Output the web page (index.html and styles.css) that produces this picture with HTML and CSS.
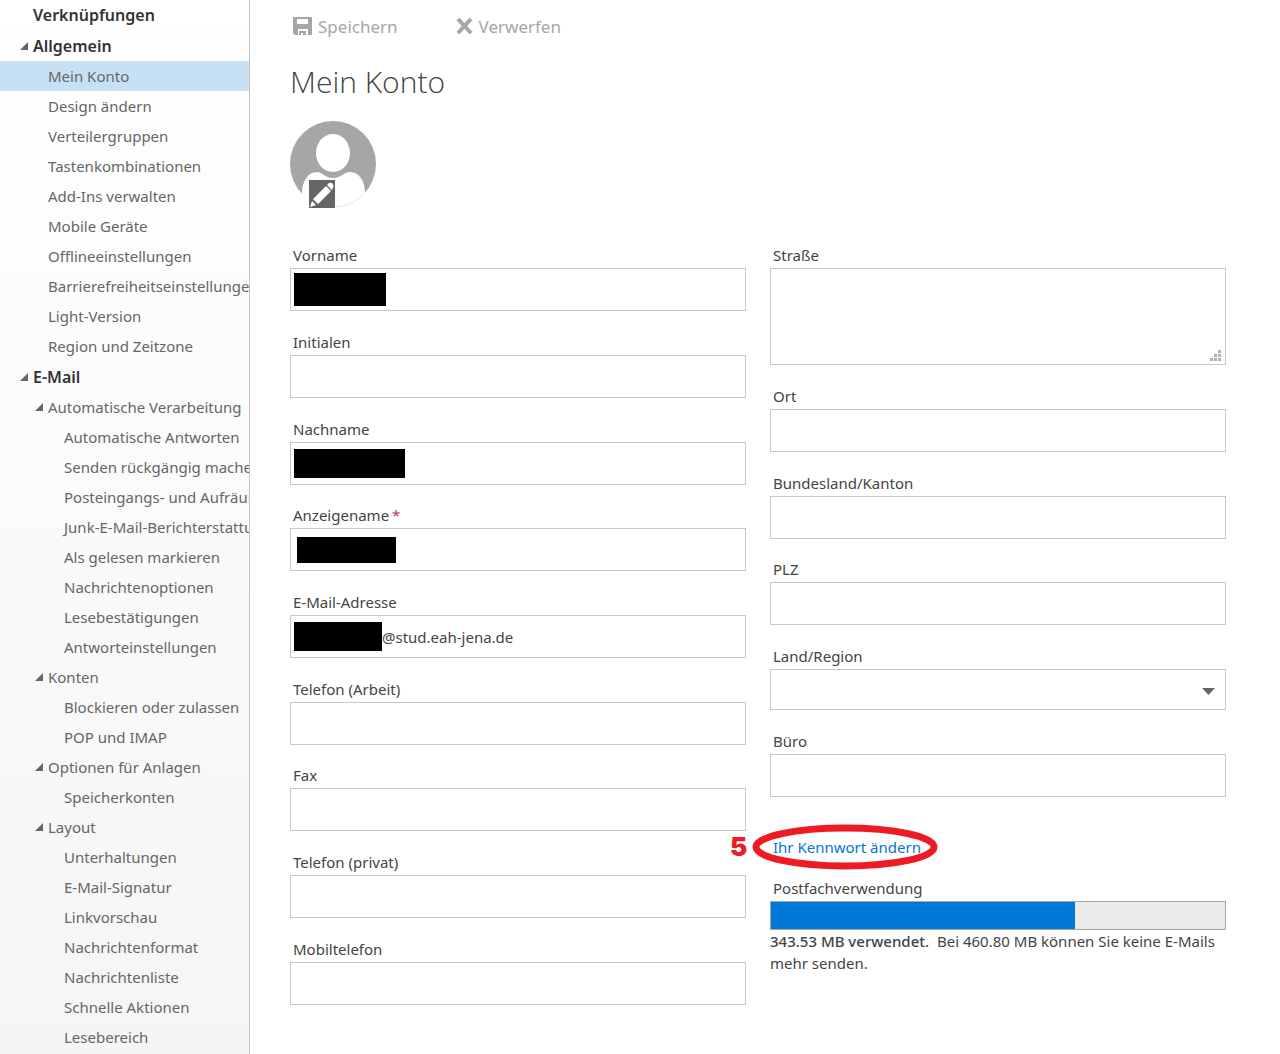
FILE: index.html
```html
<!DOCTYPE html>
<html lang="de">
<head>
<meta charset="utf-8">
<meta name="viewport" content="width=device-width, initial-scale=1">
<title>Mein Konto</title>
<link rel="stylesheet" href="styles.css">
</head>
<body>
<div class="app">
  <nav class="sidebar">
    <ul class="tree">
      <li class="node top"><a href="#">Verknüpfungen</a></li>
      <li class="node top section"><svg class="caret" viewBox="0 0 9 9"><path d="M9 0V9H0Z"/></svg><a href="#">Allgemein</a></li>
      <li class="node sub selected"><a href="#">Mein Konto</a></li>
      <li class="node sub"><a href="#">Design ändern</a></li>
      <li class="node sub"><a href="#">Verteilergruppen</a></li>
      <li class="node sub"><a href="#">Tastenkombinationen</a></li>
      <li class="node sub"><a href="#">Add-Ins verwalten</a></li>
      <li class="node sub"><a href="#">Mobile Geräte</a></li>
      <li class="node sub"><a href="#">Offlineeinstellungen</a></li>
      <li class="node sub"><a href="#">Barrierefreiheitseinstellungen</a></li>
      <li class="node sub"><a href="#">Light-Version</a></li>
      <li class="node sub"><a href="#">Region und Zeitzone</a></li>
      <li class="node top section"><svg class="caret" viewBox="0 0 9 9"><path d="M9 0V9H0Z"/></svg><a href="#">E-Mail</a></li>
      <li class="node sub"><svg class="caret" viewBox="0 0 9 9"><path d="M9 0V9H0Z"/></svg><a href="#">Automatische Verarbeitung</a></li>
      <li class="node leaf"><a href="#">Automatische Antworten</a></li>
      <li class="node leaf"><a href="#">Senden rückgängig machen</a></li>
      <li class="node leaf"><a href="#">Posteingangs- und Aufräumregeln</a></li>
      <li class="node leaf"><a href="#">Junk-E-Mail-Berichterstattung</a></li>
      <li class="node leaf"><a href="#">Als gelesen markieren</a></li>
      <li class="node leaf"><a href="#">Nachrichtenoptionen</a></li>
      <li class="node leaf"><a href="#">Lesebestätigungen</a></li>
      <li class="node leaf"><a href="#">Antworteinstellungen</a></li>
      <li class="node sub"><svg class="caret" viewBox="0 0 9 9"><path d="M9 0V9H0Z"/></svg><a href="#">Konten</a></li>
      <li class="node leaf"><a href="#">Blockieren oder zulassen</a></li>
      <li class="node leaf"><a href="#">POP und IMAP</a></li>
      <li class="node sub"><svg class="caret" viewBox="0 0 9 9"><path d="M9 0V9H0Z"/></svg><a href="#">Optionen für Anlagen</a></li>
      <li class="node leaf"><a href="#">Speicherkonten</a></li>
      <li class="node sub"><svg class="caret" viewBox="0 0 9 9"><path d="M9 0V9H0Z"/></svg><a href="#">Layout</a></li>
      <li class="node leaf"><a href="#">Unterhaltungen</a></li>
      <li class="node leaf"><a href="#">E-Mail-Signatur</a></li>
      <li class="node leaf"><a href="#">Linkvorschau</a></li>
      <li class="node leaf"><a href="#">Nachrichtenformat</a></li>
      <li class="node leaf"><a href="#">Nachrichtenliste</a></li>
      <li class="node leaf"><a href="#">Schnelle Aktionen</a></li>
      <li class="node leaf"><a href="#">Lesebereich</a></li>
    </ul>
  </nav>

  <main class="content">
    <div class="toolbar">
      <button type="button" class="tool">
        <svg width="19" height="19" viewBox="0 0 19 19"><path fill="#a6a6a6" fill-rule="evenodd" d="M0 0H19V18H15V12H5V18H2L0 16ZM4 2V7H15V2ZM6 14H13V18H10V16H8V18H6Z"/></svg>
        <span>Speichern</span>
      </button>
      <button type="button" class="tool">
        <svg width="17" height="16" viewBox="0 0 17 16"><path fill="none" stroke="#a6a6a6" stroke-width="4" d="M2 1L15 15M15 1L2 15"/></svg>
        <span>Verwerfen</span>
      </button>
    </div>

    <h1 class="title">Mein Konto</h1>

    <button type="button" class="avatar" aria-label="Foto ändern">
      <svg width="86" height="88" viewBox="0 0 86 88">
        <circle cx="43" cy="43" r="43" fill="#a6a6a6"/>
        <ellipse cx="43" cy="32" rx="17" ry="19" fill="#fff"/>
        <path fill="#fff" d="M12 73C12 60 18 51 27 51C33 51 34 57 43 57C52 57 53 51 60 51C69 51 75 60 75 72L70 88H15Z"/>
        <path fill="none" stroke="#e4e4e4" d="M45 86A43 43 0 0 0 75 72"/>
        <rect x="19" y="59" width="26" height="28" fill="#666"/>
        <path fill="#fff" d="M36 65L41 70L28 83L23 78ZM37 64L39 62Q41 61 43 63Q44 65 43 67L42 69ZM22 80L26 84L20 86Z"/>
      </svg>
    </button>

    <form class="form">
      <div class="column">
        <div class="field">
          <label for="vorname">Vorname</label>
          <div class="box"><span class="redacted first"></span><input id="vorname" type="text"></div>
        </div>
        <div class="field">
          <label for="initialen">Initialen</label>
          <div class="box"><input id="initialen" type="text"></div>
        </div>
        <div class="field">
          <label for="nachname">Nachname</label>
          <div class="box"><span class="redacted last"></span><input id="nachname" type="text"></div>
        </div>
        <div class="field">
          <label for="anzeigename">Anzeigename<span class="required">*</span></label>
          <div class="box"><span class="redacted display"></span><input id="anzeigename" type="text"></div>
        </div>
        <div class="field">
          <label for="email">E-Mail-Adresse</label>
          <div class="box"><span class="redacted mail"></span><input id="email" type="text" value="@stud.eah-jena.de" readonly></div>
        </div>
        <div class="field">
          <label for="telarbeit">Telefon (Arbeit)</label>
          <div class="box"><input id="telarbeit" type="text"></div>
        </div>
        <div class="field">
          <label for="fax">Fax</label>
          <div class="box"><input id="fax" type="text"></div>
        </div>
        <div class="field">
          <label for="telprivat">Telefon (privat)</label>
          <div class="box"><input id="telprivat" type="text"></div>
        </div>
        <div class="field">
          <label for="mobil">Mobiltelefon</label>
          <div class="box"><input id="mobil" type="text"></div>
        </div>
      </div>

      <div class="column">
        <div class="field">
          <label for="strasse">Straße</label>
          <div class="box tall">
            <textarea id="strasse"></textarea>
            <svg class="grip" width="11" height="11" viewBox="0 0 11 11"><path fill="#b0b0b0" d="M8 0h3v3h-3zM4 4h3v3h-3zM8 4h3v3h-3zM0 8h3v3h-3zM4 8h3v3h-3zM8 8h3v3h-3z"/></svg>
          </div>
        </div>
        <div class="field">
          <label for="ort">Ort</label>
          <div class="box"><input id="ort" type="text"></div>
        </div>
        <div class="field">
          <label for="kanton">Bundesland/Kanton</label>
          <div class="box"><input id="kanton" type="text"></div>
        </div>
        <div class="field">
          <label for="plz">PLZ</label>
          <div class="box"><input id="plz" type="text"></div>
        </div>
        <div class="field">
          <label for="land">Land/Region</label>
          <div class="box short">
            <select id="land"><option value=""></option></select>
            <svg class="arrow" width="13" height="7" viewBox="0 0 13 7"><path fill="#666" d="M0 0H13L6.500 7Z"/></svg>
          </div>
        </div>
        <div class="field">
          <label for="buero">Büro</label>
          <div class="box"><input id="buero" type="text"></div>
        </div>
        <div class="password">
          <a href="#">Ihr Kennwort ändern</a>
          <span class="step">5</span>
          <svg class="ring" width="186" height="46" viewBox="0 0 186 46"><ellipse cx="93" cy="23" rx="89" ry="19" fill="none" stroke="#ed1c24" stroke-width="7"/></svg>
        </div>
        <div class="usage">
          <label for="postfach">Postfachverwendung</label>
          <progress id="postfach" value="67" max="100"></progress>
          <p><span class="used">343.53 MB verwendet.</span> Bei 460.80 MB können Sie keine E-Mails mehr senden.</p>
        </div>
      </div>
    </form>
  </main>
</div>
</body>
</html>
```
FILE: styles.css
```css
* {
  box-sizing: border-box;
}

body {
  margin: 0;
  background: #fff;
  color: #444;
  font-family: "Segoe UI", "Noto Sans", sans-serif;
  font-size: 15px;
}

button,
input,
select,
textarea {
  font: inherit;
  color: inherit;
  background: none;
  border: 0;
  padding: 0;
  margin: 0;
  outline: 0;
}

.app {
  display: flex;
  min-height: 100vh;
}

/* Navigation tree */
.sidebar {
  flex: 0 0 250px;
  overflow: hidden;
  border-right: 1px solid #c4c4c4;
  background: linear-gradient(#fff, #f5f5f5);
}

.tree {
  list-style: none;
  margin: 0;
  padding: 0;
}

.node {
  display: flex;
  align-items: center;
  height: 30px;
  line-height: 30px;
  white-space: nowrap;
}

.node a {
  color: #666;
  text-decoration: none;
}

.top {
  padding-left: 33px;
  font-size: 16px;
}

.top a {
  color: #333;
  font-weight: 600;
}

.section {
  height: 31px;
}

.sub {
  padding-left: 48px;
}

.leaf {
  padding-left: 64px;
}

.selected {
  background: #c7e0f4;
}

.caret {
  flex: none;
  width: 8px;
  height: 8px;
  margin-left: -13px;
  margin-right: 5px;
  fill: #666;
}

/* Main area */
.content {
  flex: 1;
  min-width: 0;
  padding: 11px 54px 40px 40px;
}

.toolbar {
  display: flex;
  gap: 58px;
  padding-left: 3px;
}

.tool {
  display: flex;
  align-items: center;
  gap: 6px;
  height: 30px;
  color: #a6a6a6;
  font-size: 17px;
}

.title {
  margin: 21px 0 19px;
  font-family: "Segoe UI Light", "Open Sans", sans-serif;
  font-size: 30px;
  font-weight: 300;
  line-height: 40px;
}

.avatar {
  display: block;
  height: 88px;
}

.avatar svg {
  display: block;
}

.form {
  display: grid;
  grid-template-columns: 1fr 1fr;
  gap: 24px;
  padding-top: 35px;
}

.field {
  margin-bottom: 20px;
}

.field:nth-child(3n) {
  margin-bottom: 19px;
}

.field label,
.usage label {
  display: block;
  height: 24px;
  padding-left: 3px;
  line-height: 22px;
}

.required {
  margin-left: 3px;
  color: #c8404c;
}

.box {
  position: relative;
  display: flex;
  align-items: center;
  height: 43px;
  padding-left: 3px;
  border: 1px solid #c8c8c8;
}

.box input,
.box select,
.box textarea {
  flex: 1;
  min-width: 0;
  height: 100%;
}

.box select {
  appearance: none;
}

.box textarea {
  resize: none;
}

.tall {
  height: 97px;
}

.short {
  height: 41px;
}

.grip {
  position: absolute;
  right: 4px;
  bottom: 3px;
}

.arrow {
  position: absolute;
  right: 10px;
  top: 18px;
  pointer-events: none;
}

.redacted {
  flex: none;
  background: #000;
}

.first {
  width: 92px;
  height: 33px;
}

.last {
  width: 111px;
  height: 29px;
}

.display {
  width: 99px;
  height: 26px;
  margin-left: 3px;
}

.mail {
  width: 88px;
  height: 29px;
}

/* Password link with its marker */
.password {
  position: relative;
  margin-top: 38px;
  padding-left: 3px;
  line-height: 24px;
}

.password a {
  color: #0078d7;
  text-decoration: none;
}

.ring {
  position: absolute;
  left: -18px;
  top: -11px;
  pointer-events: none;
}

.step {
  position: absolute;
  left: -40px;
  top: 0;
  color: #ed1c24;
  font-family: Inter, sans-serif;
  font-size: 26px;
  font-weight: 900;
}

.usage {
  padding-top: 18px;
}

.usage progress {
  appearance: none;
  display: block;
  width: 100%;
  height: 29px;
  border: 1px solid #a6a6a6;
  background: #eaeaea;
}

.usage progress::-webkit-progress-bar {
  background: #eaeaea;
}

.usage progress::-webkit-progress-value {
  background: #0078d7;
}

.usage p {
  margin: 0;
  line-height: 22px;
}

.used {
  margin-right: 4px;
  font-weight: 500;
}
```
